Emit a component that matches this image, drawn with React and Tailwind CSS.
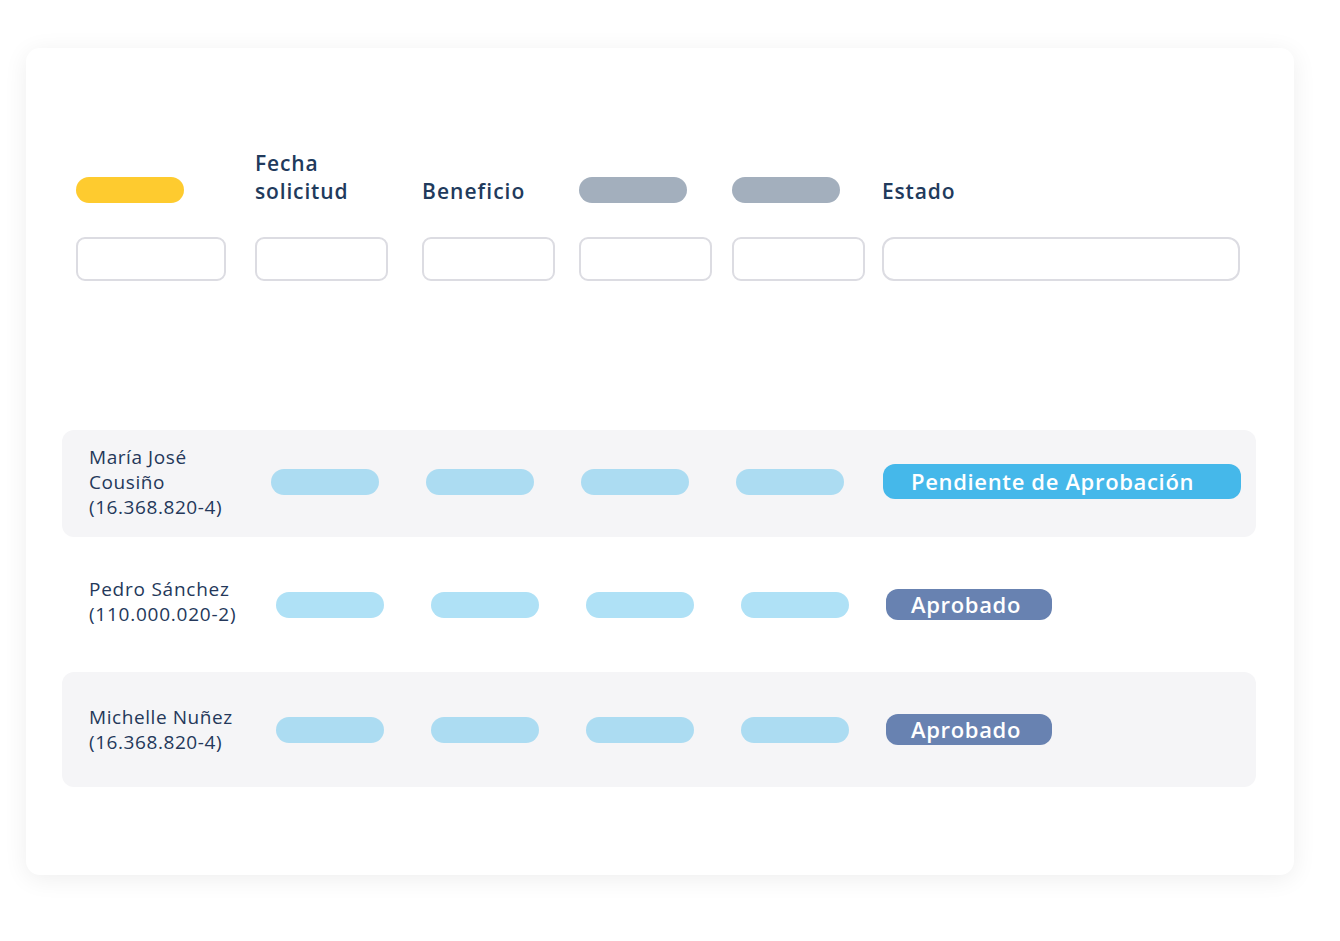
export default function App() {
  const font = { fontFamily: "'Open Sans', Lato, sans-serif" };
  const Pill = ({ c }) => <div className={`h-[26px] w-[108px] rounded-full ${c}`} />;
  return (
    <div className="min-h-screen bg-white pt-[48px] pl-[26px]" style={font}>
      <div className="w-[1268px] h-[827px] rounded-[14px] bg-white shadow-[0_4px_24px_rgba(0,0,0,0.07)] pt-[101px]">
        {/* header */}
        <div className="pl-[50px] grid grid-cols-[179px_167px_157px_153px_150px_358px] text-[#213a5c]">
          <div className="h-[56px] flex items-end pb-[2px]"><Pill c="bg-[#fecb2f]" /></div>
          <div className="h-[56px] flex items-end text-[21px] font-semibold leading-[28px] tracking-[0.04em]">Fecha<br />solicitud</div>
          <div className="h-[56px] flex items-end text-[21px] font-semibold leading-[28px] tracking-[0.05em]">Beneficio</div>
          <div className="h-[56px] flex items-end pb-[2px]"><Pill c="bg-[#a3afbd]" /></div>
          <div className="h-[56px] flex items-end pb-[2px]"><Pill c="bg-[#a3afbd]" /></div>
          <div className="h-[56px] flex items-end text-[21px] font-semibold leading-[28px] tracking-[0.04em]">Estado</div>
        </div>
        <div className="pl-[50px] mt-[32px] grid grid-cols-[179px_167px_157px_153px_150px_358px]">
          <div className="h-[44px] w-[150px] rounded-[9px] border-2 border-[#dcdce2]" />
          <div className="h-[44px] w-[133px] rounded-[9px] border-2 border-[#dcdce2]" />
          <div className="h-[44px] w-[133px] rounded-[9px] border-2 border-[#dcdce2]" />
          <div className="h-[44px] w-[133px] rounded-[9px] border-2 border-[#dcdce2]" />
          <div className="h-[44px] w-[133px] rounded-[9px] border-2 border-[#dcdce2]" />
          <div className="h-[44px] w-[358px] rounded-[12px] border-2 border-[#dcdce2]" />
        </div>
        {/* rows */}
        <div className="ml-[36px] w-[1194px] mt-[149px] flex flex-col gap-[14px] text-[#24385a]">
          <div className="h-[107px] rounded-[12px] bg-[#f5f5f7] flex items-center pl-[27px]">
            <div className="w-[182px] text-[19px] leading-[25px] tracking-[0.03em] -mt-[3px]">María José<br />Cousiño<br />(16.368.820-4)</div>
            <div className="flex gap-[47px] -mt-[4px]">
              <Pill c="bg-[#acdcf2]" /><Pill c="bg-[#acdcf2]" /><Pill c="bg-[#acdcf2]" /><Pill c="bg-[#acdcf2]" />
            </div>
            <div className="ml-[39px] -mt-[5px] h-[35px] w-[358px] rounded-[12px] bg-[#45b8ea] text-white text-[22px] font-semibold tracking-[0.03em] flex items-center pl-[28px]">Pendiente de Aprobación</div>
          </div>
          <div className="h-[107px] flex items-center pl-[27px]">
            <div className="w-[187px] text-[19px] leading-[25px] tracking-[0.04em] -mt-[5px]">Pedro Sánchez<br />(110.000.020-2)</div>
            <div className="flex gap-[47px]">
              <Pill c="bg-[#afe1f6]" /><Pill c="bg-[#afe1f6]" /><Pill c="bg-[#afe1f6]" /><Pill c="bg-[#afe1f6]" />
            </div>
            <div className="ml-[37px] h-[31px] w-[166px] rounded-[12px] bg-[#6882b1] text-white text-[22px] font-semibold tracking-[0.03em] flex items-center pl-[25px]">Aprobado</div>
          </div>
          <div className="h-[115px] rounded-[12px] bg-[#f5f5f7] flex items-center pl-[27px]">
            <div className="w-[187px] text-[19px] leading-[25px] tracking-[0.03em]">Michelle Nuñez<br />(16.368.820-4)</div>
            <div className="flex gap-[47px]">
              <Pill c="bg-[#acdcf2]" /><Pill c="bg-[#acdcf2]" /><Pill c="bg-[#acdcf2]" /><Pill c="bg-[#acdcf2]" />
            </div>
            <div className="ml-[37px] h-[31px] w-[166px] rounded-[12px] bg-[#6882b1] text-white text-[22px] font-semibold tracking-[0.03em] flex items-center pl-[25px]">Aprobado</div>
          </div>
        </div>
      </div>
    </div>
  );
}
